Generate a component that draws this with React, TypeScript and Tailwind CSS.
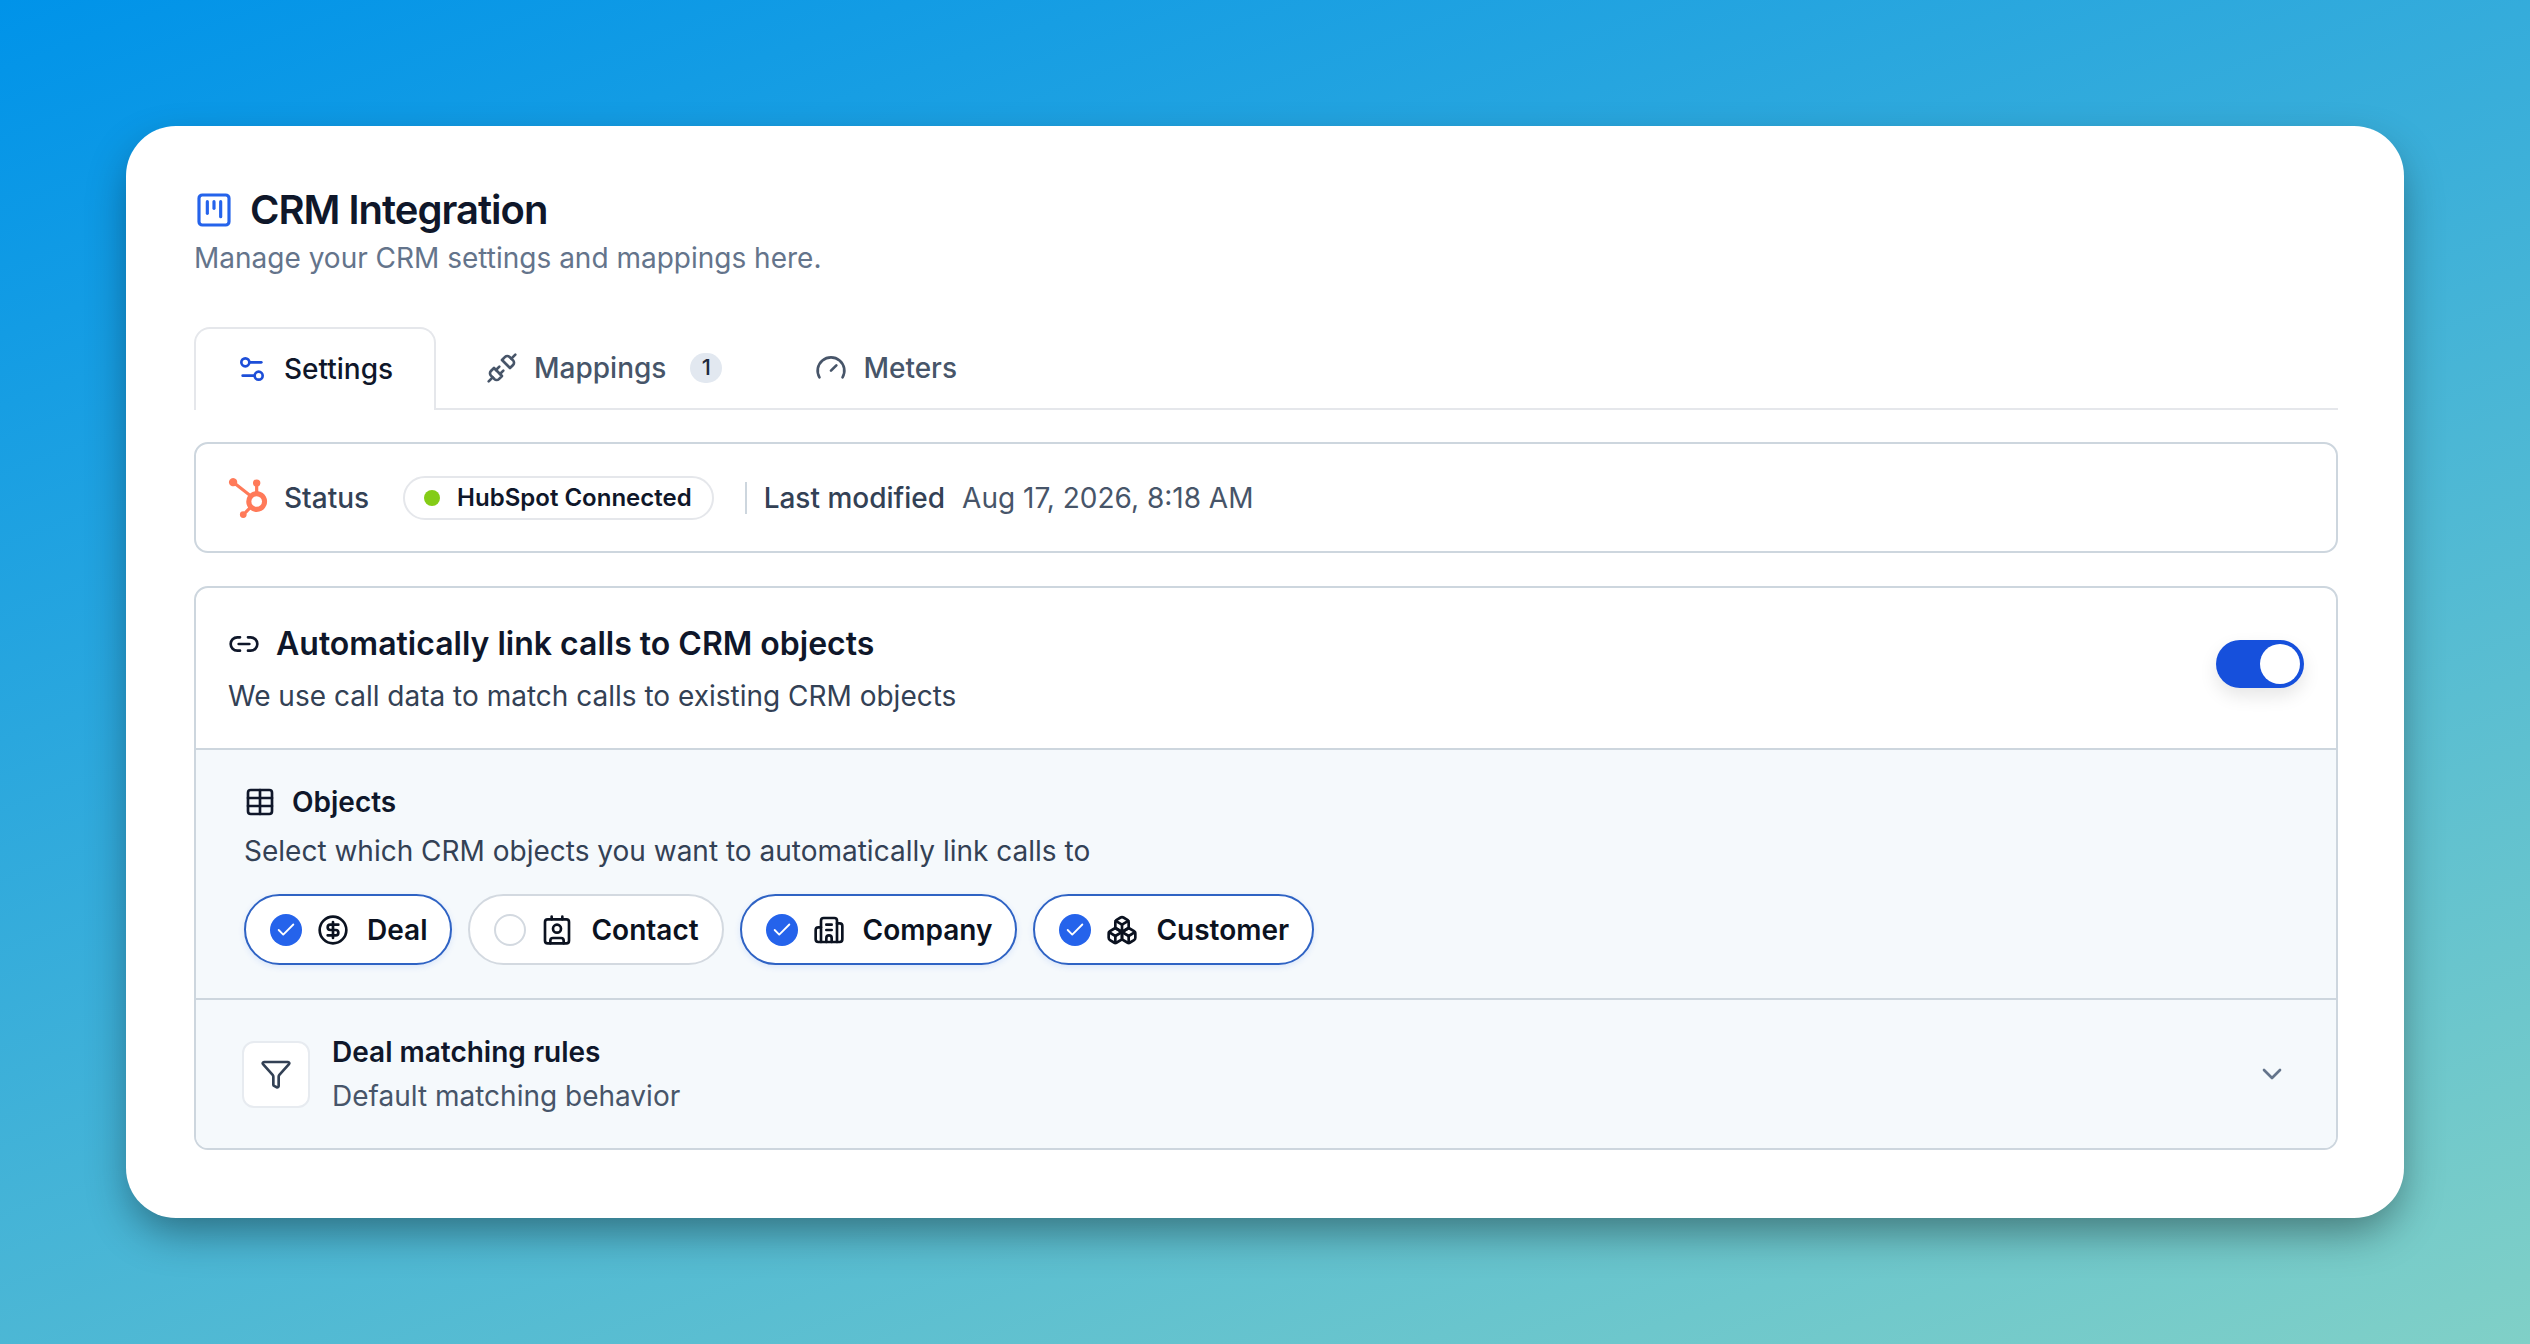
import { SquareKanban, Settings2, Unplug, Gauge, Link2, Table, CircleDollarSign, Contact, Building2, Boxes, Funnel, ChevronDown, Check } from "lucide-react";
import { SiHubspot } from "react-icons/si";
import type { ComponentType } from "react";

type PillProps = {
  label: string;
  icon: ComponentType<{ className?: string; strokeWidth?: number }>;
  checked?: boolean;
};

function ObjectPill({ label, icon: Icon, checked = true }: PillProps) {
  return (
    <div
      className={
        checked
          ? "flex h-[71px] items-center rounded-full border-2 border-[#2f63c4] bg-white pl-[24px] pr-[23px] shadow-[0_2px_6px_rgba(37,99,235,0.12)]"
          : "flex h-[71px] items-center rounded-full border-2 border-[#d3d9e0] bg-white pl-[24px] pr-[23px]"
      }
    >
      {checked ? (
        <span className="flex h-[32px] w-[32px] items-center justify-center rounded-full bg-[#2563eb]">
          <Check className="h-[22px] w-[22px] text-white" strokeWidth={2} />
        </span>
      ) : (
        <span className="h-[32px] w-[32px] rounded-full border-2 border-[#d3d9e0] bg-white" />
      )}
      <Icon className="ml-[15px] h-[32px] w-[32px] text-[#0b1220]" strokeWidth={2} />
      <span className="ml-[18px] text-[28px] font-semibold leading-none text-[#0b1220]">{label}</span>
    </div>
  );
}

export default function App() {
  return (
    <div className="min-h-screen bg-[linear-gradient(160deg,#0093e9_0%,#80d0c7_100%)] px-[126px] pb-[126px] pt-[126px] font-['Inter',sans-serif]">
      <div className="h-[1092px] rounded-[50px] bg-white pb-[69px] pl-[68px] pr-[66px] pt-[67px] shadow-[0_18px_44px_-6px_rgba(0,0,0,0.42)]">
        <div className="flex h-[34px] items-center">
          <SquareKanban className="h-[40px] w-[40px] text-[#2563eb]" strokeWidth={1.9} />
          <h1 className="ml-[16px] text-[40px] font-semibold leading-none tracking-[-0.025em] text-[#0f172a]">CRM Integration</h1>
        </div>
        <p className="mt-[11px] text-[28px] leading-[40px] text-[#64748b]">Manage your CRM settings and mappings here.</p>

        <div className="mt-[49px] flex h-[83px] gap-[5px] border-b-2 border-[#e5e7eb]">
          <div className="-mb-[2px] flex h-[83px] w-[242px] items-center rounded-t-[16px] border-2 border-b-0 border-[#e5e7eb] bg-white pb-[2px] pl-[40px]">
            <Settings2 className="h-[32px] w-[32px] text-[#1d4ed8]" strokeWidth={2} />
            <span className="ml-[16px] text-[28px] font-medium text-[#0f172a]">Settings</span>
          </div>
          <div className="flex items-center pl-[45px] pr-[43px]">
            <Unplug className="h-[32px] w-[32px] text-[#475569]" strokeWidth={2} />
            <span className="ml-[16px] text-[28px] font-medium text-[#475569]">Mappings</span>
            <span className="ml-[24px] flex h-[30px] w-[32px] items-center justify-center rounded-full bg-[#e2e8f0] text-[22px] font-medium text-[#1e293b]">1</span>
          </div>
          <div className="flex items-center px-[45px]">
            <Gauge className="h-[32px] w-[32px] text-[#475569]" strokeWidth={2} />
            <span className="ml-[16px] text-[28px] font-medium text-[#475569]">Meters</span>
          </div>
        </div>

        <div className="mt-[32px] flex h-[111px] items-center rounded-[14px] border-2 border-[#cdd6de] pl-[32px]">
          <SiHubspot className="h-[40px] w-[40px] text-[#ff7a59]" />
          <span className="ml-[16px] text-[28px] font-medium text-[#334155]">Status</span>
          <div className="ml-[34px] flex h-[44px] items-center rounded-full border-2 border-[#e5e7eb] pl-[19px] pr-[20px]">
            <span className="h-[16px] w-[16px] rounded-full bg-[#84cc16]" />
            <span className="ml-[17px] text-[24px] font-semibold text-[#0f172a]">HubSpot Connected</span>
          </div>
          <span className="ml-[31px] h-[32px] w-[2px] bg-[#cdd6de]" />
          <span className="ml-[17px] text-[28px] font-medium text-[#334155]">Last modified</span>
          <span className="ml-[17px] text-[28px] text-[#475569]">Aug 17, 2026, 8:18 AM</span>
        </div>

        <div className="mt-[33px] overflow-hidden rounded-[14px] border-2 border-[#cdd6de]">
          <div className="flex h-[160px] items-center justify-between pl-[32px] pr-[32px]">
            <div className="pt-[4px]">
              <div className="flex items-center">
                <Link2 className="h-[32px] w-[32px] text-[#0f172a]" strokeWidth={2} />
                <span className="ml-[16px] text-[32px] font-semibold leading-[40px] text-[#0f172a]">Automatically link calls to CRM objects</span>
              </div>
              <p className="mt-[12px] text-[28px] leading-[40px] text-[#334155]">We use call data to match calls to existing CRM objects</p>
            </div>
            <div className="mb-[9px] flex h-[48px] w-[88px] items-center justify-end rounded-full bg-[#1650dc] p-[4px] shadow-[0_8px_18px_rgba(0,0,0,0.10)]">
              <span className="h-[40px] w-[40px] rounded-full bg-white" />
            </div>
          </div>

          <div className="border-t-2 border-[#cdd6de] bg-[#f5f9fc] pb-[33px] pl-[48px] pt-[36px]">
            <div className="flex h-[32px] items-center">
              <Table className="h-[32px] w-[32px] text-[#0f172a]" strokeWidth={2} />
              <span className="ml-[16px] text-[28px] font-semibold text-[#0f172a]">Objects</span>
            </div>
            <p className="mt-[15px] text-[28px] leading-[36px] text-[#334155]">Select which CRM objects you want to automatically link calls to</p>
            <div className="mt-[25px] flex gap-[16px]">
              <ObjectPill label="Deal" icon={CircleDollarSign} />
              <ObjectPill label="Contact" icon={Contact} checked={false} />
              <ObjectPill label="Company" icon={Building2} />
              <ObjectPill label="Customer" icon={Boxes} />
            </div>
          </div>

          <div className="flex h-[150px] items-center justify-between border-t-2 border-[#cdd6de] bg-[#f5f9fc] pl-[46px] pr-[48px]">
            <div className="flex items-center">
              <div className="flex h-[67px] w-[68px] items-center justify-center rounded-[12px] border-2 border-[#e7ebf0] bg-white">
                <Funnel className="h-[32px] w-[32px] text-[#334155]" strokeWidth={2} />
              </div>
              <div className="ml-[22px]">
                <div className="text-[28px] font-semibold leading-[40px] text-[#0f172a]">Deal matching rules</div>
                <div className="mt-[4px] text-[28px] leading-[40px] text-[#475569]">Default matching behavior</div>
              </div>
            </div>
            <ChevronDown className="h-[32px] w-[32px] text-[#64748b]" strokeWidth={2} />
          </div>
        </div>
      </div>
    </div>
  );
}
